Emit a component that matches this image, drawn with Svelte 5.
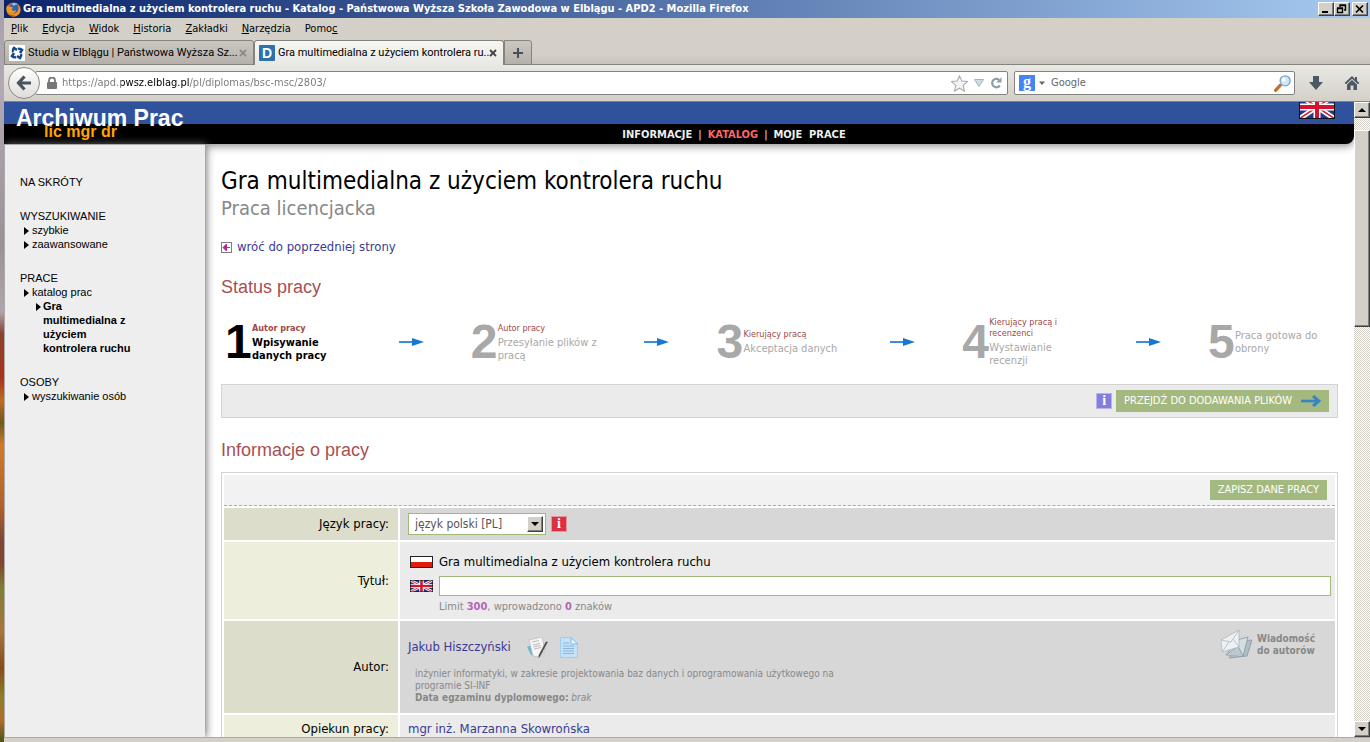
<script>
  const menu = [
    ['', 'P', 'lik'], ['', 'E', 'dycja'], ['', 'W', 'idok'], ['', 'H', 'istoria'],
    ['', 'Z', 'akładki'], ['', 'N', 'arzędzia'], ['Pomo', 'c', '']
  ];
  const steps = [
    { n: 1, who: 'Autor pracy', what: 'Wpisywanie danych pracy', active: true },
    { n: 2, who: 'Autor pracy', what: 'Przesyłanie plików z pracą' },
    { n: 3, who: 'Kierujący pracą', what: 'Akceptacja danych' },
    { n: 4, who: 'Kierujący pracą i recenzenci', what: 'Wystawianie recenzji' },
    { n: 5, who: '', what: 'Praca gotowa do obrony' }
  ];
  let url = $state('https://apd.pwsz.elblag.pl/pl/diplomas/bsc-msc/2803/');
  let search = $state('');
  let titleEn = $state('');
  let lang = $state('pl');
</script>

{#snippet union()}
  <svg class="flag" viewBox="0 0 36 24" preserveAspectRatio="none" aria-hidden="true">
    <rect width="36" height="24" fill="#1a3a8c" />
    <path d="M0 0L36 24M36 0L0 24" stroke="#fff" stroke-width="5" />
    <path d="M0 0L36 24M36 0L0 24" stroke="#d81f3a" stroke-width="1.6" />
    <path d="M18 0V24M0 12H36" stroke="#fff" stroke-width="7" />
    <path d="M18 0V24M0 12H36" stroke="#d3142f" stroke-width="4" />
    <rect x=".5" y=".5" width="35" height="23" fill="none" stroke="#111" />
  </svg>
{/snippet}

<div class="desktop">
  <div class="wallpaper"></div>
  <div class="window">
    <header class="titlebar">
      <svg class="fox" viewBox="0 0 16 16" aria-hidden="true">
        <circle cx="8" cy="8" r="7.5" fill="#e0661a" />
        <circle cx="8.6" cy="6.6" r="5" fill="#2d62b4" />
        <path d="M6 2c2-1.400 5-1 6.500.6C10.500 2.500 9 3 8.500 4.500z" fill="#7fc3ec" />
        <path d="M1 4c1 0 2 .5 2.600 1.200C5 4.600 6.600 5.200 7.500 6.300L5.800 7.600C6.500 9.800 9.500 9.500 10.800 8.600 10.500 11.500 7.500 12.600 5 11.500 8 14.500 13 12 13.400 7.500 13.500 5.500 13 4 12.300 3 15 5 15.900 8 15 11 13 16.300 5 17 1.800 12.200.2 9.600.1 6.500 1 4z" fill="#f39a1d" />
        <path d="M2 10c1.500 3.500 5 5 8.500 4C7.500 16.500 3 15 2 10z" fill="#c33a15" />
      </svg>
      <span class="wintitle">Gra multimedialna z użyciem kontrolera ruchu - Katalog - Państwowa Wyższa Szkoła Zawodowa w Elblągu - APD2 - Mozilla Firefox</span>
      <div class="winbtns">
        <button aria-label="Minimalizuj"><svg viewBox="0 0 12 10"><path d="M2 8H8" stroke="#000" stroke-width="2" /></svg></button>
        <button aria-label="Przywróć"><svg viewBox="0 0 12 10"><path d="M4 3V1H10M4.500 1.500H9.500V6H8M1.500 4.500H6.500V8.500H1.500ZM1 4H7" fill="none" stroke="#000" stroke-width="1.400" /></svg></button>
        <button class="x" aria-label="Zamknij"><svg viewBox="0 0 12 10"><path d="M2 1.500L9 8.500M9 1.500L2 8.500" stroke="#000" stroke-width="1.700" /></svg></button>
      </div>
    </header>

    <nav class="menubar" aria-label="Menu">
      {#each menu as [a, k, b]}
        <button>{a}<u>{k}</u>{b}</button>
      {/each}
    </nav>

    <div class="tabs">
      <div class="tab">
        <svg class="fav" viewBox="0 0 16 16" aria-hidden="true">
          <rect width="16" height="16" fill="#fff" />
          <g fill="none" stroke="#154a90" stroke-width="2.600">
            <path d="M4 7A4 4 0 0 1 5 3L8 5M9 4A4 4 0 0 1 13 5L11 8M12 9A4 4 0 0 1 11 13L8 11M7 12A4 4 0 0 1 3 11L5 8" />
          </g>
        </svg>
        <button class="tabname">Studia w Elblągu | Państwowa Wyższa Sz...</button>
        <button class="close dim" aria-label="Zamknij kartę"><svg viewBox="0 0 8 8"><path d="M1 1L7 7M7 1L1 7" stroke="currentColor" stroke-width="1.800" /></svg></button>
      </div>
      <div class="tab current">
        <span class="fav d">D</span>
        <button class="tabname">Gra multimedialna z użyciem kontrolera ru...</button>
        <button class="close" aria-label="Zamknij kartę"><svg viewBox="0 0 8 8"><path d="M1 1L7 7M7 1L1 7" stroke="currentColor" stroke-width="1.800" /></svg></button>
      </div>
      <button class="newtab" aria-label="Nowa karta"><svg viewBox="0 0 12 12"><path d="M6 1V11M1 6H11" stroke="#43505c" stroke-width="2" /></svg></button>
    </div>

    <div class="toolbar">
      <button class="back" aria-label="Wstecz">
        <svg viewBox="0 0 16 16"><path d="M8.500 1.500L2.500 8L8.500 14.500M3 8H15" fill="none" stroke="#48545f" stroke-width="3.200" /></svg>
      </button>
      <div class="urlbar">
        <svg class="lock" viewBox="0 0 12 12" aria-hidden="true"><path d="M3 6V3.500a3 3 0 0 1 6 0V6" fill="none" stroke="#777" stroke-width="1.800" /><rect x="1" y="5" width="10" height="7" rx="1" fill="#777" /></svg>
        <input class="url" aria-label="Adres" bind:value={url} />
        <svg class="star" viewBox="0 0 16 16" aria-hidden="true"><path d="M8 .8L10.200 5.700L15.500 6.200L11.500 9.800L12.700 15.200L8 12.400L3.300 15.200L4.500 9.800L.5 6.200L5.800 5.700Z" fill="#f4f4f4" stroke="#a9a9a9" /></svg>
        <svg class="drop" viewBox="0 0 10 8" aria-hidden="true"><path d="M.5.5H9.500L5 7.500Z" fill="#d3dbe2" stroke="#a8b2bc" /></svg>
        <button class="reload" aria-label="Odśwież"><svg viewBox="0 0 12 12"><path d="M9 2.800A4.200 4.200 0 1 0 9.800 8.500" fill="none" stroke="#8f9ba6" stroke-width="2.200" /><path d="M11.500.3V5.600H6.200Z" fill="#8f9ba6" /></svg></button>
      </div>
      <div class="searchbar">
        <span class="fav g">g</span>
        <svg class="caret" viewBox="0 0 6 4" aria-hidden="true"><path d="M0 .5H6L3 4Z" fill="#666" /></svg>
        <input class="search" aria-label="Szukaj" placeholder="Google" bind:value={search} />
        <svg class="lens" viewBox="0 0 16 16" aria-hidden="true"><path d="M1.500 14.500L6 9.500" stroke="#c56f2e" stroke-width="3" stroke-linecap="round" /><circle cx="10.500" cy="5.500" r="4.700" fill="#cfe7fb" stroke="#7aa5cf" stroke-width="1.300" /><circle cx="9" cy="4.200" r="1.800" fill="#fff" /></svg>
      </div>
      <button class="tool" aria-label="Pobrane"><svg viewBox="0 0 16 16"><path d="M5 1H11V7H15L8 15L1 7H5Z" fill="#4c5864" /></svg></button>
      <button class="tool" aria-label="Strona startowa"><svg viewBox="0 0 16 16"><path d="M8 1L.6 8L2 9.300L8 3.800L14 9.300L15.400 8L13 5.700V2H11V3.900Z" fill="#4c5864" /><path d="M8 5L3 9.600V15H6.600V10.500H9.400V15H13V9.600Z" fill="#4c5864" /></svg></button>
    </div>

    <div class="view">
      <div class="page">
        <div class="banner">
          <div class="blue">
            <div class="logo">Archiwum Prac<small>lic mgr dr</small></div>
            <a class="langlink" href="#en" aria-label="English">{@render union()}</a>
          </div>
          <nav class="black" aria-label="Serwis">
            <a href="#info">INFORMACJE</a><i>|</i><a class="on" href="#katalog">KATALOG</a><i>|</i><a href="#prace">MOJE&nbsp; PRACE</a>
          </nav>
        </div>

        <div class="body">
          <aside>
            <h4>NA SKRÓTY</h4>
            <h4>WYSZUKIWANIE</h4>
            <ul><li><a href="#s">szybkie</a></li><li><a href="#z">zaawansowane</a></li></ul>
            <h4>PRACE</h4>
            <ul>
              <li><a href="#k">katalog prac</a>
                <ul class="sub"><li><a href="#g">Gra multimedialna z użyciem kontrolera ruchu</a></li></ul>
              </li>
            </ul>
            <h4>OSOBY</h4>
            <ul><li class="wide"><a href="#o">wyszukiwanie osób</a></li></ul>
          </aside>

          <main>
            <h1>Gra multimedialna z użyciem kontrolera ruchu</h1>
            <p class="kind">Praca licencjacka</p>
            <a class="return" href="#back">
              <svg viewBox="0 0 11 11" aria-hidden="true"><rect x=".5" y=".5" width="10" height="10" fill="#fff" stroke="#7d7d7d" /><path d="M2 5.500L5.500 2V9ZM5 5.500H9" fill="#b52a80" stroke="#b52a80" stroke-width="1" /></svg>
              wróć do poprzedniej strony
            </a>

            <h2>Status pracy</h2>
            <ol class="steps">
              {#each steps as s}
                <li class:active={s.active}>
                  <b class="num">{s.n}</b>
                  <div class="desc">
                    {#if s.who}<span class="who">{s.who}</span>{/if}
                    <span>{s.what}</span>
                  </div>
                  {#if s.n < 5}
                    <svg class="arrow" viewBox="0 0 25 8" aria-hidden="true"><path d="M0 4H15" stroke="#5aa5e4" stroke-width="2" /><path d="M0 4H15" stroke="#1878d0" /><path d="M13 0L25 4L13 8Z" fill="#1878d0" /></svg>
                  {/if}
                </li>
              {/each}
            </ol>

            <div class="actions">
              <span class="info">i</span>
              <button class="green big">PRZEJDŹ DO DODAWANIA PLIKÓW
                <svg viewBox="0 0 20 12" aria-hidden="true"><path d="M0 6H17" stroke="#3784c4" stroke-width="2.600" /><path d="M12 1L18 6L12 11" fill="none" stroke="#3784c4" stroke-width="3" /></svg>
              </button>
            </div>

            <h2>Informacje o pracy</h2>
            <div class="sheet">
              <div class="save"><button class="green">ZAPISZ DANE PRACY</button></div>
              <table>
                <tbody>
                  <tr class="dark">
                    <th scope="row"><label for="lang">Język pracy:</label></th>
                    <td>
                      <div class="line">
                        <div class="pick">
                          <select id="lang" bind:value={lang}><option value="pl">język polski [PL]</option></select>
                          <span class="pickarrow"></span>
                        </div>
                        <span class="info red">i</span>
                      </div>
                    </td>
                  </tr>
                  <tr class="light titles">
                    <th scope="row"><label for="title-en">Tytuł:</label></th>
                    <td>
                      <div class="line">
                        <svg class="flag" viewBox="0 0 23 12" aria-hidden="true"><rect width="23" height="12" fill="#fff" /><rect y="6" width="23" height="6" fill="#e01c0c" /><rect x=".5" y=".5" width="22" height="11" fill="none" stroke="#222" /></svg>
                        <span>Gra multimedialna z użyciem kontrolera ruchu</span>
                      </div>
                      <div class="line">
                        {@render union()}
                        <input id="title-en" bind:value={titleEn} />
                      </div>
                      <p class="limit">Limit <b>300</b>, wprowadzono <b>0</b> znaków</p>
                    </td>
                  </tr>
                  <tr class="dark author">
                    <th scope="row">Autor:</th>
                    <td>
                      <div class="line">
                        <a href="#autor">Jakub Hiszczyński</a>
                        <svg class="pen" viewBox="0 0 21 21" aria-hidden="true">
                          <path d="M0 10L4 8L8 19L4 18Z" fill="#6fb6d6" />
                          <path d="M2 3L15 0L18 14Q13 15 12 20L6 19Z" fill="#f5f5f4" stroke="#b9b9b9" stroke-width=".7" />
                          <path d="M5 5L12 3.500M6 8L13 6.500M6.500 10L13.500 8.500M7 12L14 10.500" stroke="#bbb" />
                          <path d="M20.500 5L13 19L12 20.500L12 18L19 5Z" fill="#444" stroke="#555" stroke-width=".6" />
                        </svg>
                        <svg class="doc" viewBox="0 0 18 21" aria-hidden="true"><path d="M.5.5H11L17.500 7V20.500H.5Z" fill="#c3e2f9" stroke="#a5cdeb" /><path d="M11 .5V7H17.500Z" fill="#eaf6ff" stroke="#86b6db" /><path d="M3 6H9M3 9H14M3 11.500H14M3 14H14M3 16.500H14" stroke="#86b6db" /></svg>
                        <a class="mail" href="#mail">
                          <svg viewBox="0 0 31 29" aria-hidden="true">
                            <g stroke="#7e8f99" stroke-width=".7">
                              <path d="M20 11L31 10L26 26L8 28Z" fill="#b0bdc5" />
                              <path d="M16 10L27 7L22 26L5 25Z" fill="#d5dde2" />
                              <path d="M5 25L17 16L22 26" fill="#bcc8cf" />
                            </g>
                            <g stroke="#a3b0b8" stroke-width=".7">
                              <path d="M0 10L18 0V17L1 22Z" fill="#eef1f3" />
                              <path d="M0 10L10 12L18 0M1 22L8 12M18 17L12 9" fill="none" />
                            </g>
                          </svg>
                          <span>Wiadomość<br />do autorów</span>
                        </a>
                      </div>
                      <p class="note">inżynier informatyki, w zakresie projektowania baz danych i oprogramowania użytkowego na programie SI-INF<br /><b>Data egzaminu dyplomowego:</b> <em>brak</em></p>
                    </td>
                  </tr>
                  <tr class="light">
                    <th scope="row">Opiekun pracy:</th>
                    <td><a href="#opiekun">mgr inż. Marzanna Skowrońska</a></td>
                  </tr>
                </tbody>
              </table>
            </div>
          </main>
        </div>
      </div>
      <div class="scroll">
        <button aria-label="W górę"><svg viewBox="0 0 8 4"><path d="M0 4L4 0L8 4Z" /></svg></button>
        <div class="thumb"></div>
        <button class="down" aria-label="W dół"><svg viewBox="0 0 8 4"><path d="M0 0L4 4L8 0Z" /></svg></button>
      </div>
    </div>
  </div>
</div>

<style>
  :global(body) { margin: 0; }
  .desktop, .desktop * { box-sizing: border-box; }
  .desktop {
    display: flex; height: 100vh; overflow: hidden; color: #000;
    font: 11px/14px "DejaVu Sans Condensed", "DejaVu Sans", sans-serif;
  }
  button, input, select { font: inherit; color: inherit; border: 0; padding: 0; margin: 0; background: none; border-radius: 0; outline: 0; }
  svg { display: block; flex: none; }
  a { color: #3a3a94; text-decoration: none; }
  .wallpaper {
    flex: 0 0 4px;
    background: linear-gradient(#a7a1ab 0, #b3a9b4 12%, #9b9096 33%, #b0a5aa 42%, #8a4030 45%, #a93418 51%, #c06a22 54%, #6d5a1c 57%, #d07a28 60%, #b5622a 68%, #7c4734 73%, #83432f 76%, #7f7c33 79%, #a8763a 85%, #8a4a1c 90%, #8e7f22 94%, #b06a2c 97%, #4d5416);
  }
  .window { flex: 1; min-width: 0; display: flex; flex-direction: column; background: #d4d0c8; padding-bottom: 4px; }

  .titlebar {
    display: flex; align-items: center; height: 18px; gap: 2px; padding: 0 2px;
    color: #fff; font-weight: bold; background: linear-gradient(90deg, #0a246a, #a6caf0);
  }
  .fox { width: 15px; height: 15px; }
  .wintitle { flex: 1; min-width: 0; white-space: nowrap; overflow: hidden; }
  .winbtns { display: flex; }
  .winbtns button, .scroll button, .thumb, .pickarrow {
    background: #d4d0c8; border: 1px solid; border-color: #fff #404040 #404040 #fff; box-shadow: inset -1px -1px #808080;
  }
  .winbtns button { width: 16px; height: 14px; display: grid; place-items: center; }
  .winbtns .x { margin-left: 2px; }
  .winbtns svg { width: 12px; height: 10px; }

  .menubar { display: flex; height: 22px; padding: 0 7px; gap: 14px; align-items: center; }
  .tabs { display: flex; height: 25px; background: linear-gradient(#d4d0c8 60%, #c6c2ba); box-shadow: inset 0 -1px #85837e; }
  .tab { display: flex; align-items: center; width: 250px; padding: 0 6px 0 4px; gap: 3px; border: 1px solid #85837e; border-radius: 3px 3px 0 0; background: linear-gradient(#cac7c1, #b5b1aa); font-family: Roboto, sans-serif; }
  .tab.current { background: linear-gradient(#f6f6f3, #e8e8e4); border-bottom: 0; }
  .tabname { flex: 1; min-width: 0; text-align: left; white-space: nowrap; }
  .fav { width: 16px; height: 16px; flex: none; text-align: center; color: #fff; font: bold 14px/16px "Liberation Sans", sans-serif; }
  .d { background: #2b72ae; border-radius: 1px; }
  .g { background: #4285f4; font: bold 16px/13px "Liberation Serif", serif; }
  .close { color: #444; }
  .dim { color: #8e8c88; }
  .close svg { width: 8px; height: 8px; }
  .newtab { width: 28px; border: 1px solid #85837e; border-radius: 0 3px 0 0; background: linear-gradient(#cac7c1, #b5b1aa); display: grid; place-items: center; }
  .newtab svg { width: 12px; height: 12px; }

  .toolbar { display: flex; align-items: center; height: 37px; padding: 0 10px 0 4px; background: linear-gradient(#e8e8e3, #d4d0c8); border-bottom: 1px solid #85837e; }
  .back { width: 32px; height: 32px; border: 1px solid #8c8a86; border-radius: 50%; background: linear-gradient(#fff, #dfddd9); display: grid; place-items: center; z-index: 1; }
  .back svg { width: 16px; height: 16px; }
  .urlbar, .searchbar { display: flex; align-items: center; height: 24px; border: 1px solid #85837e; border-radius: 2px; background: #fff; }
  .urlbar { flex: 1; margin-left: -5px; padding: 0 5px 0 10px; }
  .lock { width: 12px; height: 12px; margin-right: 4px; }
  .url {
    flex: 1; min-width: 0; color: transparent;
    background: linear-gradient(90deg, #777 0 59px, #000 59px 127px, #777 127px); -webkit-background-clip: text; background-clip: text;
  }
  .star { width: 17px; height: 17px; margin-right: 6px; }
  .drop { width: 10px; height: 8px; margin-right: 6px; }
  .reload svg { width: 12px; height: 12px; }
  .searchbar { flex: 0 0 281px; margin: 0 13px 0 6px; padding: 0 3px 0 4px; }
  .caret { width: 6px; height: 4px; margin: 0 6px 0 4px; }
  .search { flex: 1; min-width: 0; }
  .search::placeholder { color: #666; opacity: 1; }
  .lens { width: 17px; height: 17px; }
  .tool + .tool { margin-left: 20px; }
  .tool svg { width: 16px; height: 16px; }

  .view { flex: 1; min-height: 0; display: flex; border-bottom: 1px solid #aaa; }
  .page { flex: 1; min-width: 0; overflow: hidden; background: #fff; display: flex; flex-direction: column; }
  .banner { flex: none; background: #000; border-radius: 0 0 8px 0; box-shadow: 0 2px 8px #888; }
  .blue { display: flex; justify-content: space-between; height: 22px; background: #30529d; padding: 0 19px 0 12px; }
  .logo { position: relative; z-index: 1; color: #fff; font: bold 23px/32px "Liberation Sans", sans-serif; }
  .logo small { position: absolute; left: 28px; top: 20px; color: #ffa500; font: bold 16px/20px "Liberation Sans", sans-serif; white-space: nowrap; }
  .langlink .flag { width: 36px; height: 24px; margin-top: -7px; }
  .black { display: flex; justify-content: center; gap: 6px; height: 20px; font-weight: bold; line-height: 22px; padding-left: 110px; }
  .black a, .black i { color: #eee; font-style: normal; }
  .black i { font-weight: normal; }
  .black a.on { color: #ff6666; }

  .body { flex: 1; min-height: 0; display: flex; }
  aside { flex: 0 0 201px; border: 1px solid #aaa; border-width: 1px 0 0 1px; background: #eee; box-shadow: 1px 0 8px #666; padding: 30px 68px 0 15px; font: 11px/14px "Liberation Sans", sans-serif; }
  aside a { color: #000; }
  h4 { margin: 0 0 20px; font: inherit; white-space: nowrap; }
  h4:has(+ ul) { margin: 0; }
  ul { list-style: none; margin: 0 0 20px; padding: 0; }
  li { position: relative; }
  aside li { padding-left: 12px; }
  aside li::before { content: ""; position: absolute; left: 4px; top: 4px; border: 4px solid transparent; border-left: 5px solid #000; border-right: 0; }
  .sub { margin: 0; font-weight: bold; }
  .sub li { padding-left: 11px; }
  .wide { white-space: nowrap; }

  main { flex: 1; min-width: 0; padding: 21px 16px 0; font-size: 13px; line-height: 16px; }
  h1 { margin: 0; font-weight: normal; font-size: 24px; line-height: 32px; }
  .kind { margin: 0 0 20px; color: #888; font-size: 20px; line-height: 22px; }
  .return { display: flex; align-items: center; gap: 5px; }
  .return svg { width: 11px; height: 11px; }
  h2 { margin: 0; color: #a85050; font: 18px/24px "Liberation Sans", sans-serif; }
  .return + h2 { margin-top: 20px; }
  .steps { display: grid; grid-template-columns: repeat(4, 22fr) 12fr; list-style: none; margin: 12px 0 11px; padding: 0; height: 62px; color: #a8a8a8; font-size: 11px; line-height: 13px; }
  .steps li { display: flex; align-items: center; padding-left: 4px; }
  .num { width: 27px; font: bold 48px/54px "Liberation Sans", sans-serif; }
  .desc { display: flex; flex-direction: column; gap: 2px; width: 100px; }
  .who { color: #a04848; font-size: 9px; line-height: 11px; }
  .active { color: #000; }
  .active .desc { font-weight: bold; }
  .arrow { width: 25px; height: 8px; margin: 0 43px 0 auto; }
  .actions { display: flex; align-items: center; justify-content: flex-end; gap: 4px; height: 34px; border: 1px solid #d4d4d4; background: #ebebeb; padding: 0 8px; margin-bottom: 20px; }
  .info { width: 16px; height: 16px; border: 1px solid #b9b5ea; background: #857ddb; color: #fff; text-align: center; font: bold 14px/14px "Liberation Serif", serif; }
  .red { background: #dc2f42; border-color: #e8949c; }
  .green { height: 20px; padding: 0 8px; background: #a4b97f; color: #fff; font-size: 11px; white-space: nowrap; }
  .big { height: 22px; display: flex; align-items: center; gap: 9px; }
  .big svg { width: 20px; height: 12px; }

  .sheet { margin-top: 10px; border: 1px solid #d4d4d4; padding: 2px; }
  .save { display: flex; justify-content: flex-end; align-items: center; height: 31px; padding-right: 8px; background: #f2f2f2; border-bottom: 1px dashed #aaa; }
  table { width: 100%; border-collapse: collapse; }
  tr { border-bottom: 2px solid #fff; }
  tr:first-child { border-top: 2px solid #fff; }
  th { width: 175px; padding: 0 9px 0 0; text-align: right; font-weight: normal; border-right: 2px solid #fff; }
  td { padding: 5px 4px 5px 8px; }
  .dark th { background: #dcdecb; }
  .dark td { background: #d7d7d7; }
  .light th { background: #edefdc; }
  .light td { background: #ebebeb; padding-top: 6px; }
  .line { display: flex; align-items: center; gap: 5px; }
  .titles .line { gap: 6px; min-height: 20px; margin-bottom: 4px; }
  .line .flag { width: 23px; height: 12px; margin-left: 2px; }
  .pick { position: relative; }
  select { display: block; appearance: none; width: 138px; height: 22px; padding: 0 6px; border: 1px solid #a0b878; background: #fff; color: #555; font-size: 12px; }
  .pickarrow { position: absolute; right: 3px; top: 3px; width: 16px; height: 16px; pointer-events: none; }
  .pickarrow::after { content: ""; position: absolute; left: 3px; top: 5px; border: 4px solid transparent; border-top-color: #000; border-bottom: 0; }
  .light.titles td { padding-top: 10px; }
  #title-en { flex: 1; min-width: 0; height: 20px; background: #fff; border: 1px solid #a0b878; padding: 0 4px; }
  .limit { margin: 0 0 0 31px; color: #888; font-size: 11px; line-height: 14px; }
  .limit b { color: #b565b5; }
  .author .line { height: 34px; margin-top: 4px; }
  .author td { padding: 5px 20px 9px 8px; }
  .pen { width: 21px; height: 21px; margin-left: 11px; }
  .doc { width: 18px; height: 21px; margin-left: 7px; }
  .mail { display: flex; align-items: center; gap: 5px; margin-left: auto; align-self: flex-start; color: #888; font-weight: bold; font-size: 10px; line-height: 12px; white-space: nowrap; }
  .mail svg { width: 31px; height: 29px; }
  .note { margin: 4px 0 0 7px; max-width: 440px; color: #888; font-size: 10px; line-height: 12px; }

  .scroll { flex: 0 0 16px; display: flex; flex-direction: column; background: repeating-conic-gradient(#fff 0 25%, #d4d0c8 0 50%) 0 0 / 2px 2px; }
  .scroll button { height: 16px; display: grid; place-items: center; }
  .scroll svg { width: 8px; height: 4px; }
  .thumb { margin-top: 12px; height: 31%; }
  .down { margin-top: auto; }
</style>
